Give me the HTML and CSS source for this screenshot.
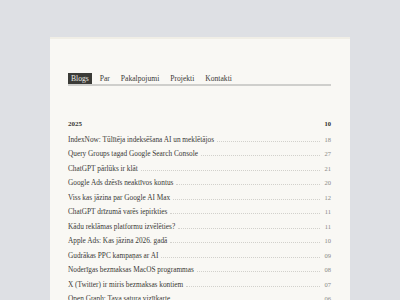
FILE: index.html
```html
<!DOCTYPE html>
<html lang="lv">
<head>
    <meta charset="UTF-8">
    <meta name="viewport" content="width=device-width, initial-scale=1.0">
    <title>Blogs</title>
    <link rel="stylesheet" href="styles.css">
</head>
<body>
<div class="page-card">
    <nav class="main-nav">
        <a class="nav-item active" href="#">Blogs</a>
        <a class="nav-item" href="#">Par</a>
        <a class="nav-item" href="#">Pakalpojumi</a>
        <a class="nav-item" href="#">Projekti</a>
        <a class="nav-item" href="#">Kontakti</a>
    </nav>
    <section class="post-list">
        <div class="post-row year-row">
            <span class="post-title">2025</span>
            <span class="post-count">10</span>
        </div>
        <div class="post-row"><span class="post-title">IndexNow: Tūlītēja indeksēšana AI un meklētājos</span><span class="leader"></span><span class="post-count">18</span></div>
        <div class="post-row"><span class="post-title">Query Groups tagad Google Search Console</span><span class="leader"></span><span class="post-count">27</span></div>
        <div class="post-row"><span class="post-title">ChatGPT pārlūks ir klāt</span><span class="leader"></span><span class="post-count">21</span></div>
        <div class="post-row"><span class="post-title">Google Ads dzēsīs neaktīvos kontus</span><span class="leader"></span><span class="post-count">20</span></div>
        <div class="post-row"><span class="post-title">Viss kas jāzina par Google AI Max</span><span class="leader"></span><span class="post-count">12</span></div>
        <div class="post-row"><span class="post-title">ChatGPT drīzumā varēs iepirkties</span><span class="leader"></span><span class="post-count">11</span></div>
        <div class="post-row"><span class="post-title">Kādu reklāmas platformu izvēlēties?</span><span class="leader"></span><span class="post-count">11</span></div>
        <div class="post-row"><span class="post-title">Apple Ads: Kas jāzina 2026. gadā</span><span class="leader"></span><span class="post-count">10</span></div>
        <div class="post-row"><span class="post-title">Gudrākas PPC kampaņas ar AI</span><span class="leader"></span><span class="post-count">09</span></div>
        <div class="post-row"><span class="post-title">Noderīgas bezmaksas MacOS programmas</span><span class="leader"></span><span class="post-count">08</span></div>
        <div class="post-row"><span class="post-title">X (Twitter) ir miris bezmaksas kontiem</span><span class="leader"></span><span class="post-count">07</span></div>
        <div class="post-row"><span class="post-title">Open Graph: Tava satura vizītkarte</span><span class="leader"></span><span class="post-count">06</span></div>
    </section>
</div>
</body>
</html>
```

FILE: styles.css
```css
body {
    margin: 0;
    background-color: #dee0e4;
    font-family: "Liberation Serif", serif;
    color: #3a3936;
    height: 300px;
    overflow: hidden;
}
.page-card {
    width: 300px;
    margin-left: 50px;
    margin-top: 37px;
    min-height: 263px;
    background-color: #f9f8f4;
    border-top: 2px solid #f0eee6;
    padding: 34px 19px 0 18px;
    box-sizing: border-box;
}
.main-nav {
    display: flex;
    gap: 5px;
    border-bottom: 2px solid #cfcfcc;
    margin-bottom: 34px;
}
.nav-item {
    font-size: 7.6px;
    line-height: 11px;
    padding: 0 3px;
    color: #3a3936;
    text-decoration: none;
}
.nav-item.active {
    background-color: #3b3b37;
    color: #ecebe6;
}
.post-row {
    display: flex;
    align-items: baseline;
    height: 14.5px;
    font-size: 7.3px;
}
.year-row {
    font-weight: bold;
    justify-content: space-between;
    font-size: 7px;
}
.post-title {
    white-space: nowrap;
}
.leader {
    flex: 1;
    border-bottom: 1px dotted #d2d1cc;
    margin: 0 4px 0 3px;
}
.post-count {
    font-size: 6.5px;
    color: #8a8985;
    min-width: 7px;
    text-align: right;
}
.year-row .post-count {
    color: #2a2a28;
}
```
